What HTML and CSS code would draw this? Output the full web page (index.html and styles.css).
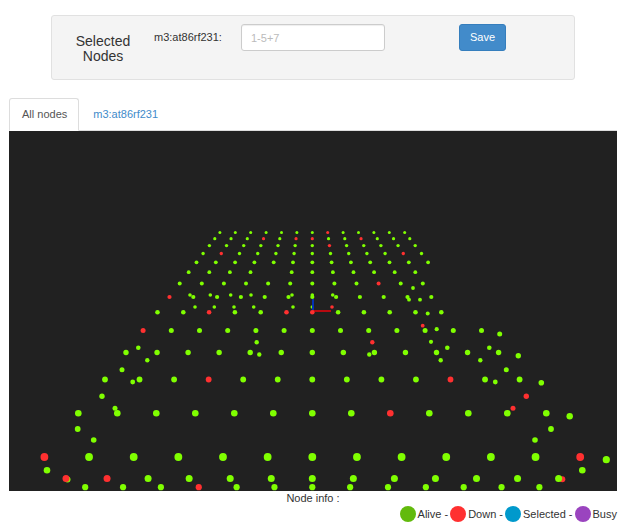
FILE: index.html
```html
<!DOCTYPE html>
<html lang="en">
<head>
<meta charset="utf-8">
<meta name="viewport" content="width=device-width, initial-scale=1">
<title>Node selection</title>
<link rel="stylesheet" href="styles.css">
</head>
<body>
<main class="page">
  <form class="well">
    <h1 class="well-title">Selected Nodes</h1>
    <label class="well-label" for="nodes">m3:at86rf231:</label>
    <input class="well-input" id="nodes" type="text" placeholder="1-5+7">
    <div class="well-action"><button class="btn" type="button">Save</button></div>
  </form>

  <nav class="tabs">
    <a class="tab tab-active" href="#all">All nodes</a>
    <a class="tab" href="#m3">m3:at86rf231</a>
  </nav>

  <svg class="map" id="map" viewBox="0 0 608 360" role="img" aria-label="Map of nodes"></svg>

  <p class="info">Node info :</p>
  <div class="legend">
    <span class="key"><i class="swatch alive"></i>Alive -</span>
    <span class="key"><i class="swatch down"></i>Down -</span>
    <span class="key"><i class="swatch selected"></i>Selected -</span>
    <span class="key"><i class="swatch busy"></i>Busy</span>
  </div>
</main>
<script src="map.js"></script>
</body>
</html>
```
FILE: styles.css
```css
* {
  box-sizing: border-box;
}

body {
  margin: 0;
  background: #fff;
  color: #333;
  font-family: "Liberation Sans", Arial, sans-serif;
  font-size: 11px;
  line-height: 15px;
}

.page {
  padding: 15px 10px 8px 9px;
}

.well {
  display: grid;
  grid-template-columns: 102fr 87fr 144fr 74fr 115fr;
  align-items: start;
  margin: 0 42px 18px;
  padding: 8px 0 15px;
  background: #f4f4f4;
  border: 1px solid #e1e1e1;
  border-radius: 3px;
}

.well-title {
  margin: 10px 0 0;
  padding: 0 16px;
  font-size: 14px;
  font-weight: 400;
  line-height: 15px;
  text-align: center;
}

.well-label {
  padding-top: 6px;
}

.well-input {
  width: 100%;
  height: 27px;
  padding: 0 9px;
  background: #fff;
  border: 1px solid #ccc;
  border-radius: 3px;
  box-shadow: inset 0 1px 1px rgba(0, 0, 0, 0.07);
  color: #555;
  font: inherit;
}

.well-input::placeholder {
  color: #bbb;
  opacity: 1;
}

.well-action {
  grid-column: 5;
}

.btn {
  height: 27px;
  padding: 0 10px;
  background: #428bca;
  border: 1px solid #357ebd;
  border-radius: 3px;
  color: #fff;
  font: inherit;
}

.tabs {
  display: flex;
  gap: 1px;
  border-bottom: 1px solid #ddd;
}

.tab {
  margin-bottom: -1px;
  padding: 8px 11px 8px 12px;
  border: 1px solid transparent;
  border-radius: 3px 3px 0 0;
  color: #428bca;
  text-decoration: none;
}

.tab-active {
  background: #fff;
  border-color: #ddd #ddd #fff;
  color: #555;
}

.map {
  display: block;
  width: 100%;
  background: #212121;
}

.node-alive {
  fill: #80ff00;
}

.node-down {
  fill: #ff3030;
}

.axis-x {
  stroke: #b80a10;
  stroke-width: 2;
}

.axis-y {
  stroke: #0432b4;
  stroke-width: 2;
}

.info {
  margin: 0;
  text-align: center;
}

.legend {
  display: flex;
  justify-content: flex-end;
  gap: 2px;
}

.key {
  display: flex;
  align-items: center;
  gap: 2px;
}

.swatch {
  width: 16px;
  height: 16px;
  border-radius: 50%;
}

.alive {
  background: #62ba0c;
}

.down {
  background: #ff3030;
}

.selected {
  background: #0099cc;
}

.busy {
  background: #9a44bf;
}
```
FILE: map.js
```js
const map = document.getElementById("map");
const CENTER = 303.3;

function add(name, attrs) {
  const el = document.createElementNS("http://www.w3.org/2000/svg", name);
  for (const key in attrs) el.setAttribute(key, attrs[key]);
  map.appendChild(el);
}

function node(x, y, r, down) {
  add("circle", { cx: x, cy: y, r: r, class: down ? "node-down" : "node-alive" });
}

// Nodes off the main grid: x, y, radius, down
const loose = [
  [181, 164, 1.8], [201.3, 164, 1.8], [221.7, 164, 1.8], [242, 164, 1.8],
  [283, 164, 1.8], [303.3, 164, 1.8], [323.7, 164, 1.8],
  [186, 176, 1.8], [205.3, 176, 1.8], [225, 176, 1.8], [244.7, 176, 1.8],
  [284, 176, 1.8], [303.3, 176, 1.8], [323, 176, 1.8, 1],
  [404, 157, 1.9], [400, 168.7, 1.9], [411, 168.7, 1.9],
  [418.7, 182.6, 2], [413.7, 194.7, 1.9, 1], [427.7, 198.2, 2.1],
  [422, 210.8, 2.1], [438.3, 216.7, 2.3], [431.7, 229.2, 2.2],
  [247.7, 211.2, 2.2], [250.3, 223.5, 2.2], [363.3, 211.2, 2.2, 1], [360.3, 223.5, 2.2],
  [129.3, 216.7, 2.3], [138.3, 229.2, 2.2], [113, 238.7, 2.5], [123.7, 251, 2.4],
  [480.3, 216.7, 2.3], [471.3, 229.2, 2.2], [497.3, 238.7, 2.5], [486.3, 251, 2.4],
  [490.7, 203, 2.5], [509.3, 224.7, 2.7], [532.3, 251.7, 2.8], [560.7, 285.3, 3.2],
  [597.3, 328.7, 3.6],
  [93, 265.3, 2.7], [106, 277.2, 2.5], [68.7, 298, 2.9], [84.7, 309, 2.8],
  [38, 339.3, 3.3], [58.5, 348.4, 3],
  [517.3, 265.3, 2.7, 1], [504, 277.2, 2.5, 1], [542, 298, 2.9], [526, 309, 2.8],
  [573.3, 339.3, 3.3], [553.3, 348.3, 3, 1]
];

// Grid rows: y, column step, radius, last column, down columns, empty columns
const rows = [
  [101.5, 15.4, 1.5, 6, [1], []],
  [107.7, 16.25, 1.6, 6, [-3, -1, 0, 3], []],
  [114.6, 17.15, 1.7, 6, [1], []],
  [122.5, 18.2, 1.7, 6, [-5, 5], []],
  [131.3, 19.3, 1.9, 6, [], []],
  [141.2, 20.6, 1.9, 5, [], [-2]],
  [152.6, 22.1, 2, 5, [3], []],
  [166, 23.8, 2.1, 5, [-6], []],
  [181.3, 25.8, 2.3, 5, [-4, -1, 0], []],
  [199.6, 28.2, 2.5, 6, [-6], []],
  [221.5, 31.05, 2.7, 6, [], []],
  [248.5, 34.55, 2.9, 6, [-3, 4], []],
  [282.3, 39, 3.3, 6, [2], []],
  [326, 44.65, 3.9, 6, [-6, 6], []],
  [347.4, 41.05, 3.5, 6, [-6, -5], []],
  [356.2, 37.85, 3.1, 6, [-3], []]
];

loose.forEach(([x, y, r, down]) => node(x, y, r, down));

add("line", { x1: 304, y1: 168, x2: 304, y2: 179, class: "axis-y" });
add("line", { x1: 304, y1: 180, x2: 322, y2: 180, class: "axis-x" });

rows.forEach(([y, step, r, last, down, empty]) => {
  for (let i = -6; i <= last; i++) {
    if (!empty.includes(i)) node(CENTER + i * step, y, r, down.includes(i));
  }
});
```
